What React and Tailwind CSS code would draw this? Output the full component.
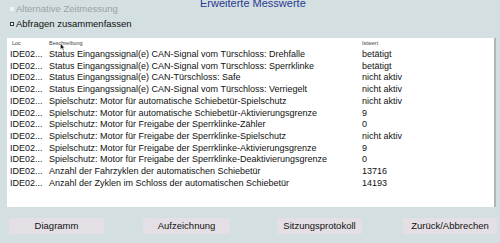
import React from "react";

const rows = [
  ["IDE02...", "Status Eingangssignal(e) CAN-Signal vom Türschloss: Drehfalle", "betätigt"],
  ["IDE02...", "Status Eingangssignal(e) CAN-Signal vom Türschloss: Sperrklinke", "betätigt"],
  ["IDE02...", "Status Eingangssignal(e) CAN-Türschloss: Safe", "nicht aktiv"],
  ["IDE02...", "Status Eingangssignal(e) CAN-Signal vom Türschloss: Verriegelt", "nicht aktiv"],
  ["IDE02...", "Spielschutz: Motor für automatische Schiebetür-Spielschutz", "nicht aktiv"],
  ["IDE02...", "Spielschutz: Motor für automatische Schiebetür-Aktivierungsgrenze", "9"],
  ["IDE02...", "Spielschutz: Motor für Freigabe der Sperrklinke-Zähler", "0"],
  ["IDE02...", "Spielschutz: Motor für Freigabe der Sperrklinke-Spielschutz", "nicht aktiv"],
  ["IDE02...", "Spielschutz: Motor für Freigabe der Sperrklinke-Aktivierungsgrenze", "9"],
  ["IDE02...", "Spielschutz: Motor für Freigabe der Sperrklinke-Deaktivierungsgrenze", "0"],
  ["IDE02...", "Anzahl der Fahrzyklen der automatischen Schiebetür", "13716"],
  ["IDE02...", "Anzahl der Zyklen im Schloss der automatischen Schiebetür", "14193"],
];

function Btn({ label, className }) {
  return (
    <button className={"h-[16px] bg-[#e4dfe4] text-[9.5px] leading-[16px] text-[#111] text-center " + className}>
      {label}
    </button>
  );
}

export default function App() {
  return (
    <div
      className="w-[500px] h-[243px] overflow-hidden bg-[#d3dfe0] flex flex-col"
      style={{ fontFamily: '"Liberation Sans", Arial, sans-serif' }}
    >
      {/* top: options + title */}
      <div className="h-[38px] flex">
        <div className="w-[200px] pl-[10px] pt-[3px] flex flex-col gap-[3px]">
          <div className="flex items-center h-[12px] text-[9.5px] text-[#9aa3a6]">
            <span className="w-[4px] h-[4px] bg-[#eef2f2] mr-[2px]" />
            Alternative Zeitmessung
          </div>
          <div className="flex items-center h-[12px] text-[9.5px] text-[#111]">
            <span className="w-[4px] h-[4px] border border-[#333] bg-white mr-[2px]" />
            Abfragen zusammenfassen
          </div>
        </div>
        <div className="-mt-[2px] text-[11px] leading-[11px] text-[#2b3990]">Erweiterte Messwerte</div>
      </div>

      {/* table */}
      <div className="relative ml-[7px] mr-[4px] h-[169px] bg-white border-r-2 border-[#aeb6b7] text-[9px] text-[#111]">
        <div className="grid grid-cols-[39px_313px_1fr] pl-[3px] pt-[1px] h-[10px] leading-[8px] text-[5.5px] text-[#444]">
          <div className="pl-[2px]">Loc</div>
          <div>Beschreibung</div>
          <div>Istwert</div>
        </div>
        <div className="mt-[1px]">
          {rows.map((r, i) => (
            <div key={i} className="grid grid-cols-[39px_313px_1fr] pl-[3px] leading-[11.7px] whitespace-nowrap">
              <div>{r[0]}</div>
              <div>{r[1]}</div>
              <div>{r[2]}</div>
            </div>
          ))}
        </div>
        <svg className="absolute left-[53px] top-[5px]" width="5" height="8" viewBox="0 0 5 8">
          <path d="M0.5 0.5 L0.5 6.5 L2 5 L3.2 7.5 L4 7 L2.9 4.7 L4.6 4.7 Z" fill="#111" stroke="#fff" strokeWidth="0.4" />
        </svg>
      </div>

      {/* buttons */}
      <div className="flex mt-[11px] pl-[9px]">
        <Btn label="Diagramm" className="w-[95px]" />
        <Btn label="Aufzeichnung" className="w-[87px] ml-[39px]" />
        <Btn label="Sitzungsprotokoll" className="w-[85px] ml-[47px]" />
        <Btn label="Zurück/Abbrechen" className="w-[94px] ml-[41px]" />
      </div>
    </div>
  );
}
